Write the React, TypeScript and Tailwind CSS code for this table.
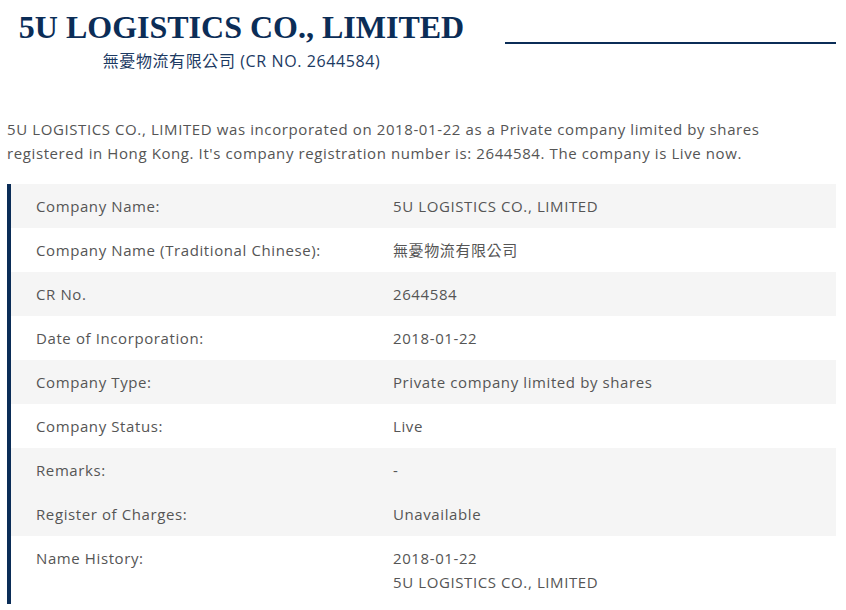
import React from 'react';

const rows: { label: string; value: React.ReactNode; shaded: boolean }[] = [
  { label: 'Company Name:', value: '5U LOGISTICS CO., LIMITED', shaded: true },
  { label: 'Company Name (Traditional Chinese):', value: '無憂物流有限公司', shaded: false },
  { label: 'CR No.', value: '2644584', shaded: true },
  { label: 'Date of Incorporation:', value: '2018-01-22', shaded: false },
  { label: 'Company Type:', value: 'Private company limited by shares', shaded: true },
  { label: 'Company Status:', value: 'Live', shaded: false },
  { label: 'Remarks:', value: '-', shaded: true },
  { label: 'Register of Charges:', value: 'Unavailable', shaded: true },
  {
    label: 'Name History:',
    value: (
      <>
        <div>2018-01-22</div>
        <div>5U LOGISTICS CO., LIMITED</div>
      </>
    ),
    shaded: false,
  },
];

export default function App() {
  return (
    <div className="w-[846px] h-[610px] overflow-hidden bg-white pl-[7px] pr-[10px] font-['Open_Sans','Noto_Sans_CJK_TC',sans-serif] text-[15px] tracking-[0.6px] text-[#555]">
      <header className="flex items-start">
        <div className="w-[469px] shrink-0 text-center pt-[7px]">
          <h1 className="font-['Liberation_Serif',serif] font-bold text-[32px] leading-[40px] tracking-normal text-[#0b2d57]">
            5U LOGISTICS CO., LIMITED
          </h1>
          <p className="text-[16px] leading-[24px] tracking-[0.6px] text-[#1c3a63] mt-[2px]">
            無憂物流有限公司 (CR NO. 2644584)
          </p>
        </div>
        <div className="flex-1 ml-[29px] mt-[42px] h-[1.5px] bg-[#0b2d57]" />
      </header>

      <p className="mt-[44px] leading-[24px]">
        5U LOGISTICS CO., LIMITED was incorporated on 2018-01-22 as a Private company limited by shares
        registered in Hong Kong. It's company registration number is: 2644584. The company is Live now.
      </p>

      <div className="mt-[19px] border-l-4 border-[#0b2d57]">
        {rows.map((row) => (
          <div
            key={row.label}
            className={`grid grid-cols-[382px_1fr] py-[10px] leading-[24px] ${row.shaded ? 'bg-[#f5f5f5]' : 'bg-white'}`}
          >
            <div className="pl-[25px]">{row.label}</div>
            <div>{row.value}</div>
          </div>
        ))}
      </div>
    </div>
  );
}
